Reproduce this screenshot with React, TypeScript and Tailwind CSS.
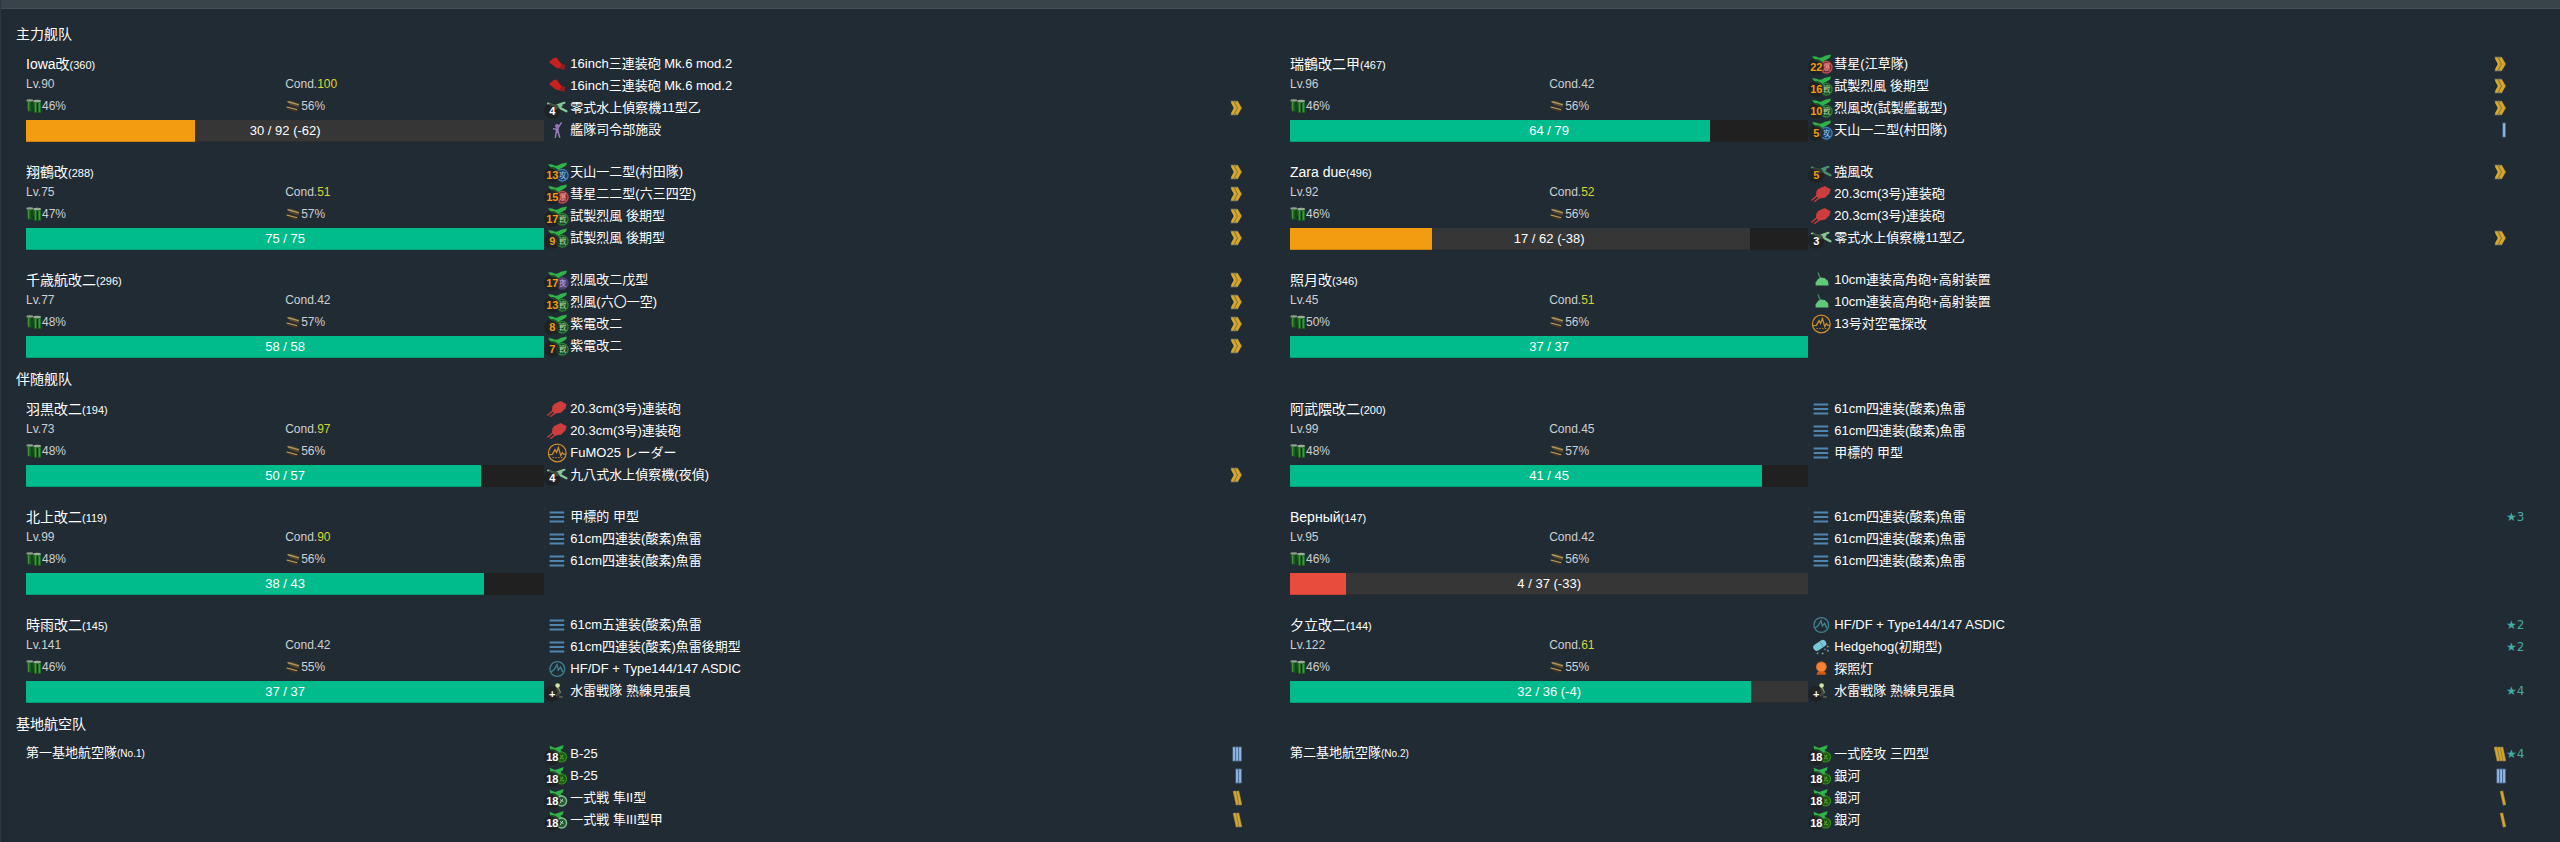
import React from 'react';

type Kind =
  | 'bigGun' | 'midGun' | 'aaGun' | 'seaplane' | 'seaFighter' | 'command'
  | 'bomber' | 'torpedoPlane' | 'fighter' | 'nightFighter' | 'landBomber' | 'landFighter'
  | 'torpedo' | 'radar' | 'sonar' | 'hedgehog' | 'searchlight' | 'lookout';

type Equip = { k: Kind; n: string; c?: string; full?: boolean; p?: number; s?: number };
type Ship = {
  name: string; power: number; lv: number; cond: number;
  fuel: number; ammo: number; hp: number; max: number; lost?: number; items: Equip[];
};

const plane = (k: Kind, n: string, c: string, p?: number): Equip => ({ k, n, c, p });
const gun203: Equip = { k: 'midGun', n: '20.3cm(3号)連装砲' };
const torp61: Equip = { k: 'torpedo', n: '61cm四連装(酸素)魚雷' };
const aa10: Equip = { k: 'aaGun', n: '10cm連装高角砲+高射装置' };
const mk6: Equip = { k: 'bigGun', n: '16inch三連装砲 Mk.6 mod.2' };

const mainFleet: Ship[] = [
  { name: 'Iowa改', power: 360, lv: 90, cond: 100, fuel: 46, ammo: 56, hp: 30, max: 92, lost: 62, items: [
    mk6, mk6, { k: 'seaplane', n: '零式水上偵察機11型乙', c: '4', full: true, p: 7 }, { k: 'command', n: '艦隊司令部施設' } ] },
  { name: '瑞鶴改二甲', power: 467, lv: 96, cond: 42, fuel: 46, ammo: 56, hp: 64, max: 79, items: [
    plane('bomber', '彗星(江草隊)', '22', 7), plane('fighter', '試製烈風 後期型', '16', 7),
    plane('fighter', '烈風改(試製艦載型)', '10', 7), plane('torpedoPlane', '天山一二型(村田隊)', '5', 1) ] },
  { name: '翔鶴改', power: 288, lv: 75, cond: 51, fuel: 47, ammo: 57, hp: 75, max: 75, items: [
    plane('torpedoPlane', '天山一二型(村田隊)', '13', 7), plane('bomber', '彗星二二型(六三四空)', '15', 7),
    plane('fighter', '試製烈風 後期型', '17', 7), plane('fighter', '試製烈風 後期型', '9', 7) ] },
  { name: 'Zara due', power: 496, lv: 92, cond: 52, fuel: 46, ammo: 56, hp: 17, max: 62, lost: 38, items: [
    plane('seaFighter', '強風改', '5', 7), gun203, gun203, { k: 'seaplane', n: '零式水上偵察機11型乙', c: '3', full: true, p: 7 } ] },
  { name: '千歳航改二', power: 296, lv: 77, cond: 42, fuel: 48, ammo: 57, hp: 58, max: 58, items: [
    plane('nightFighter', '烈風改二戊型', '17', 7), plane('fighter', '烈風(六〇一空)', '13', 7),
    plane('fighter', '紫電改二', '8', 7), plane('fighter', '紫電改二', '7', 7) ] },
  { name: '照月改', power: 346, lv: 45, cond: 51, fuel: 50, ammo: 56, hp: 37, max: 37, items: [
    aa10, aa10, { k: 'radar', n: '13号対空電探改' } ] },
];

const escortFleet: Ship[] = [
  { name: '羽黒改二', power: 194, lv: 73, cond: 97, fuel: 48, ammo: 56, hp: 50, max: 57, items: [
    gun203, gun203, { k: 'radar', n: 'FuMO25 レーダー' }, { k: 'seaplane', n: '九八式水上偵察機(夜偵)', c: '4', full: true, p: 7 } ] },
  { name: '阿武隈改二', power: 200, lv: 99, cond: 45, fuel: 48, ammo: 57, hp: 41, max: 45, items: [
    torp61, torp61, { k: 'torpedo', n: '甲標的 甲型' } ] },
  { name: '北上改二', power: 119, lv: 99, cond: 90, fuel: 48, ammo: 56, hp: 38, max: 43, items: [
    { k: 'torpedo', n: '甲標的 甲型' }, torp61, torp61 ] },
  { name: 'Верный', power: 147, lv: 95, cond: 42, fuel: 46, ammo: 56, hp: 4, max: 37, lost: 33, items: [
    { ...torp61, s: 3 }, torp61, torp61 ] },
  { name: '時雨改二', power: 145, lv: 141, cond: 42, fuel: 46, ammo: 55, hp: 37, max: 37, items: [
    { k: 'torpedo', n: '61cm五連装(酸素)魚雷' }, { k: 'torpedo', n: '61cm四連装(酸素)魚雷後期型' },
    { k: 'sonar', n: 'HF/DF + Type144/147 ASDIC' }, { k: 'lookout', n: '水雷戦隊 熟練見張員', c: '+', full: true } ] },
  { name: '夕立改二', power: 144, lv: 122, cond: 61, fuel: 46, ammo: 55, hp: 32, max: 36, lost: 4, items: [
    { k: 'sonar', n: 'HF/DF + Type144/147 ASDIC', s: 2 }, { k: 'hedgehog', n: 'Hedgehog(初期型)', s: 2 },
    { k: 'searchlight', n: '探照灯' }, { k: 'lookout', n: '水雷戦隊 熟練見張員', c: '+', full: true, s: 4 } ] },
];

const bases: { name: string; no: number; items: Equip[] }[] = [
  { name: '第一基地航空隊', no: 1, items: [
    { k: 'landBomber', n: 'B-25', c: '18', full: true, p: 3 },
    { k: 'landBomber', n: 'B-25', c: '18', full: true, p: 2 },
    { k: 'landFighter', n: '一式戦 隼II型', c: '18', full: true, p: 5 },
    { k: 'landFighter', n: '一式戦 隼III型甲', c: '18', full: true, p: 5 } ] },
  { name: '第二基地航空隊', no: 2, items: [
    { k: 'landBomber', n: '一式陸攻 三四型', c: '18', full: true, p: 6, s: 4 },
    { k: 'landBomber', n: '銀河', c: '18', full: true, p: 3 },
    { k: 'landBomber', n: '銀河', c: '18', full: true, p: 4 },
    { k: 'landBomber', n: '銀河', c: '18', full: true, p: 4 } ] },
];

const Wing = () => (
  <path d="M4 3.2 8 3.6 11 4.8 13.6 4.6 17 2.8 23 1.6 22 4.6 18.4 6.8 15.8 8 14.6 10 12 10 11 8.4 7.6 7.8Z" fill="#2fb34a" />
);

const Mark = ({ ring, fill, ch, ink }: { ring: string; fill: string; ch: string; ink: string }) => (
  <>
    <circle cx="18.3" cy="14.2" r="5.8" fill={fill} stroke={ring} strokeWidth="1.3" />
    <text x="18.3" y="17.2" fontSize="8" textAnchor="middle" fill={ink}>{ch}</text>
  </>
);

const Seaplane = ({ color }: { color: string }) => (
  <g stroke={color} fill="none" strokeLinecap="round">
    <path d="M4 6.6 12 8.8 20.4 5.8" strokeWidth="2.2" />
    <path d="M10 8.4 15 10.4 22.4 14.2" strokeWidth="2.4" />
    <path d="M12.6 9.6 17 8.4" strokeWidth="3" />
    <path d="M9 12.4 14 10.4" strokeWidth="1.8" />
  </g>
);

const LandPlane = () => (
  <path d="M5.6 2.8 11 5 14 4 19.6 2 18.8 5.4 16.4 7 19.6 10 15 9.6 11.6 10.8 10.4 8.2 6.4 7.2Z" fill="#2fb34a" />
);

const art: Record<Kind, React.ReactNode> = {
  bigGun: (
    <>
      <path d="M14.6 9 21.6 12.6 20.2 17 15 15.4Z" fill="#8c1f22" />
      <path d="M5 9.2 8.8 5.4 12.6 4.4 15.4 8.6 17.6 11.4 15 15.4 11.6 14.6 9.4 12.4Z" fill="#c72020" />
    </>
  ),
  midGun: (
    <>
      <path d="M3.4 17.6 9.4 12.2M6.2 18.8 12 14.4" stroke="#c93c3c" strokeWidth="1.4" />
      <path d="M10.2 6 16.6 3 22.6 6.2 21.4 10.4 17 14.8 10.8 15.6 8 13 8.4 8.6Z" fill="#cc3d3d" />
    </>
  ),
  aaGun: (
    <>
      <path d="M10 3.6 12.4 9.4" stroke="#3f8f57" strokeWidth="1.4" />
      <path d="M7.6 16.6V13.4L10 10 13 8.4 16.6 9 20 12 20.6 16.6Z" fill="#62c97a" />
    </>
  ),
  seaplane: <Seaplane color="#86c898" />,
  seaFighter: <Seaplane color="#4d9470" />,
  command: (
    <g stroke="#9877bd" fill="none" strokeWidth="1.5">
      <circle cx="13" cy="7" r="1.2" fill="#9877bd" />
      <path d="M9 9.8 13 10.4 17.6 3.4M13.2 9.4V13.6M11.2 18.8 12.4 13 14.2 13 15.8 18.8" />
      <path d="M13.2 9.4V14" strokeWidth="3" />
    </g>
  ),
  bomber: <><Wing /><Mark ring="#c25050" fill="#6d2c30" ch="爆" ink="#ff9c9c" /></>,
  torpedoPlane: <><Wing /><Mark ring="#3e7dbd" fill="#1f3f5f" ch="攻" ink="#8cc8ff" /></>,
  fighter: <><Wing /><Mark ring="#2a7f36" fill="#1d4428" ch="戦" ink="#9fe3a8" /></>,
  nightFighter: <><Wing /><Mark ring="#4d4470" fill="#4d4470" ch="夜" ink="#b9a8e6" /></>,
  landBomber: (
    <>
      <LandPlane />
      <circle cx="17.6" cy="14" r="5" fill="#1f5a16" stroke="#2f8a1c" strokeWidth="1.2" />
      <path d="M15.8 16.4 19 11.8M16 12.6 19 13.8M17.6 15.6H20" stroke="#49a82c" strokeWidth="1" />
    </>
  ),
  landFighter: (
    <>
      <LandPlane />
      <circle cx="17.6" cy="14" r="5" fill="#29553a" stroke="#7cc08c" strokeWidth="1.4" />
      <path d="M15.8 16.4 19 11.8M16 12.6 19.4 14.6" stroke="#9fdcae" strokeWidth="1" />
    </>
  ),
  torpedo: <path d="M5.6 6.5H20.2M5.6 11H20.2M5.6 15.5H20.2" stroke="#5285b0" strokeWidth="2.2" />,
  radar: (
    <g fill="none" stroke="#cf8b30">
      <circle cx="13.3" cy="11" r="8.9" strokeWidth="1.2" />
      <path d="M4.6 12.6 8.4 12.4 11 7.6 12.6 10.4 14.4 5.6 16.8 13.6 18.4 10.6 20 12.4H22" strokeWidth="1.3" />
      <path d="M8.5 15.6H18.5" strokeWidth="1" strokeDasharray="1.4 1.4" />
    </g>
  ),
  sonar: (
    <g fill="none" stroke="#41808f">
      <circle cx="13.3" cy="11" r="7.4" strokeWidth="1.3" />
      <path d="M7 14 10.2 11.6 13 6.6 14.4 12 16.6 9.4 19 14.4" strokeWidth="1.4" />
    </g>
  ),
  hedgehog: (
    <>
      <path d="M8.8 11.4 14.8 7.4" stroke="#7ac6d8" strokeWidth="7" strokeLinecap="round" />
      <path d="M11.6 5.8Q15.4 8 14.6 11.4" stroke="#4d97aa" strokeWidth="0.8" fill="none" />
      <g fill="#6a97a3">
        <circle cx="19.8" cy="10.6" r="1" /><circle cx="20" cy="14.8" r="1" /><circle cx="17" cy="13.4" r="0.8" />
        <circle cx="14.6" cy="17.6" r="1" /><circle cx="9.6" cy="17.2" r="1" />
      </g>
    </>
  ),
  searchlight: (
    <>
      <path d="M8.4 16.8 9.8 13.4H17L18.4 16.8Z" fill="#cf5a14" />
      <circle cx="13.4" cy="8.9" r="5" fill="#f58235" stroke="#d9651c" strokeWidth="0.8" />
    </>
  ),
  lookout: (
    <>
      <circle cx="13.6" cy="5.6" r="2.3" fill="#cfe3a2" />
      <path d="M13.4 8 15.2 12 13 16.6" stroke="#93a577" strokeWidth="3" fill="none" />
      <path d="M13 16.6 18.6 17M10 12.4 13 10" stroke="#5f6b55" strokeWidth="1.6" fill="none" />
    </>
  ),
};

const Proficiency = ({ level }: { level: number }) => {
  if (level === 7) {
    return (
      <svg viewBox="0 0 12 16" className="h-4 w-3" aria-hidden="true">
        <path d="M0.4 0.8H7.6L12 8 7.6 15.2H0.4L4 8Z" fill="#8d8152" />
        <path d="M2 1.8 5.4 8 2 14.2M6.4 1.8 9.8 8 6.4 14.2" fill="none" stroke="#dba622" strokeWidth="2.6" />
      </svg>
    );
  }
  const gold = level > 3;
  const xs = [11, 8, 5].slice(0, gold ? level - 3 : level);
  return (
    <svg viewBox="0 0 12 16" className="h-4 w-3" aria-hidden="true">
      {xs.map((x) => (
        <g key={x}>
          <path d={gold ? `M${x - 3.6} 0.8 ${x - 0.4} 15.2` : `M${x - 0.9} 0.6V15.4`} stroke={gold ? '#8d8152' : '#4f6f93'} strokeWidth="3.4" />
          <path d={gold ? `M${x - 3.4} 1.4 ${x - 0.6} 14.6` : `M${x - 0.9} 1.4V14.6`} stroke={gold ? '#dba622' : '#8fb6e2'} strokeWidth="2" />
        </g>
      ))}
    </svg>
  );
};

const Drums = () => (
  <svg viewBox="0 0 16 14" className="h-3.5 w-4" aria-hidden="true">
    <path d="M0.6 1.2H7V12.4H1.6Z" fill="#1d5c22" />
    <path d="M7 1.4H15V13.8H8.2Z" fill="#206b25" />
    <path d="M2.6 3V11.8M9.6 3.4V13M13.4 4V12.8" stroke="#43963f" strokeWidth="1.2" />
    <path d="M6 2.4V12.6M11.4 3.4V13.4" stroke="#0f3516" strokeWidth="1.2" />
    <ellipse cx="3.8" cy="1.4" rx="3.4" ry="1.1" fill="#93a391" />
    <ellipse cx="11.2" cy="2" rx="3.8" ry="1.3" fill="#9dac9b" />
  </svg>
);

const Shells = () => (
  <svg viewBox="0 0 16 14" className="h-3.5 w-4" aria-hidden="true">
    <path d="M2 2 6 1.8 14.6 4.8 13.6 8.4 4.6 5.4Z" fill="#5a4a2b" />
    <path d="M0.8 7.4 4.8 6.8 13.2 9.8 11.4 13.2 3 10.6Z" fill="#3f3220" />
    <path d="M2.6 2.6 13.8 5.8M1.6 8 12.2 10.8" stroke="#b5a16b" strokeWidth="1.1" />
  </svg>
);

const EquipRow = ({ e }: { e: Equip }) => (
  <li className="flex h-[22px] items-center">
    <span className="relative h-[22px] w-[26px] shrink-0">
      <svg viewBox="0 0 26 22" className="h-[22px] w-[26px]" aria-hidden="true">{art[e.k]}</svg>
      {e.c && (
        <span className={`absolute top-1.5 left-0 flex size-4 items-center justify-center rounded-full bg-[#202020]/70 text-[11px] leading-none font-bold ${e.full ? 'text-white' : 'text-[#f39c12]'}`}>
          {e.c}
        </span>
      )}
    </span>
    <span className="flex-1 text-[13px] leading-[22px] whitespace-nowrap text-white">{e.n}</span>
    {e.p && <Proficiency level={e.p} />}
    <span className="w-[18px] font-['DejaVu_Sans',sans-serif] text-xs whitespace-nowrap text-[#45aaa4]">{e.s ? `★${e.s}` : ''}</span>
  </li>
);

const HpBar = ({ hp, max, lost = 0 }: { hp: number; max: number; lost?: number }) => {
  const r = hp / max;
  const color = r <= 0.25 ? 'bg-[#e74c3c]' : r <= 0.5 ? 'bg-[#f39c12]' : 'bg-[#00bc8c]';
  return (
    <div className="relative mt-0.5 flex h-[22px] bg-[#202020]" role="meter" aria-label="HP" aria-valuenow={hp} aria-valuemin={0} aria-valuemax={max}>
      <div className={`${color} shadow-[inset_0_-1px_0_rgba(0,0,0,0.15)]`} style={{ width: `${r * 100}%` }} />
      <div className="bg-[#363636] shadow-[inset_0_-1px_0_rgba(0,0,0,0.15)]" style={{ width: `${(lost / max) * 100}%` }} />
      <span className="absolute inset-0 text-center text-[13px] leading-[22px] text-white">
        {hp} / {max}{lost ? ` (-${lost})` : ''}
      </span>
    </div>
  );
};

const Items = ({ items }: { items: Equip[] }) => (
  <ul className="w-7/12 pt-px pr-2.5">{items.map((e, i) => <EquipRow key={i} e={e} />)}</ul>
);

const ShipCard = ({ ship }: { ship: Ship }) => (
  <article className="flex px-2.5 pt-[7px] pb-[11px]">
    <div className="w-5/12 pt-0.5 text-xs text-[#cdd0d2]">
      <h3 className="h-5 text-sm leading-5 text-white">
        {ship.name}<span className="text-[11px]">({ship.power})</span>
      </h3>
      <div className="grid h-5 grid-cols-2 leading-5">
        <span>Lv.{ship.lv}</span>
        <span>Cond.<span className={ship.cond > 49 ? 'text-[#d6d63c]' : ''}>{ship.cond}</span></span>
      </div>
      <div className="grid h-6 grid-cols-2 items-center">
        <span className="flex items-center"><Drums />{ship.fuel}%</span>
        <span className="flex items-center"><Shells />{ship.ammo}%</span>
      </div>
      <HpBar hp={ship.hp} max={ship.max} lost={ship.lost} />
    </div>
    <Items items={ship.items} />
  </article>
);

const Section = ({ title, children }: { title: string; children: React.ReactNode }) => (
  <section>
    <h2 className="h-[21px] font-['Liberation_Sans','Noto_Sans_CJK_SC',sans-serif] text-sm leading-[21px] text-white">{title}</h2>
    <div className="grid grid-cols-2">{children}</div>
  </section>
);

export default function App() {
  return (
    <div className="min-h-screen border-l border-[#2d3740] bg-[#212b33] font-['Liberation_Sans','Noto_Sans_CJK_JP',sans-serif]">
      <header className="h-[9px] border-b border-[#434e56] bg-[#38434a]" />
      <main className="pt-[15px] pr-4 pl-[15px]">
        <Section title="主力舰队">
          {mainFleet.map((s) => <ShipCard key={s.name} ship={s} />)}
        </Section>
        <Section title="伴随舰队">
          {escortFleet.map((s) => <ShipCard key={s.name} ship={s} />)}
        </Section>
        <Section title="基地航空队">
          {bases.map((b) => (
            <article key={b.no} className="flex px-2.5 pt-[7px]">
              <h3 className="w-5/12 text-[13px] leading-[22px] text-white">
                {b.name}<span className="text-[10px]">(No.{b.no})</span>
              </h3>
              <Items items={b.items} />
            </article>
          ))}
        </Section>
      </main>
    </div>
  );
}
